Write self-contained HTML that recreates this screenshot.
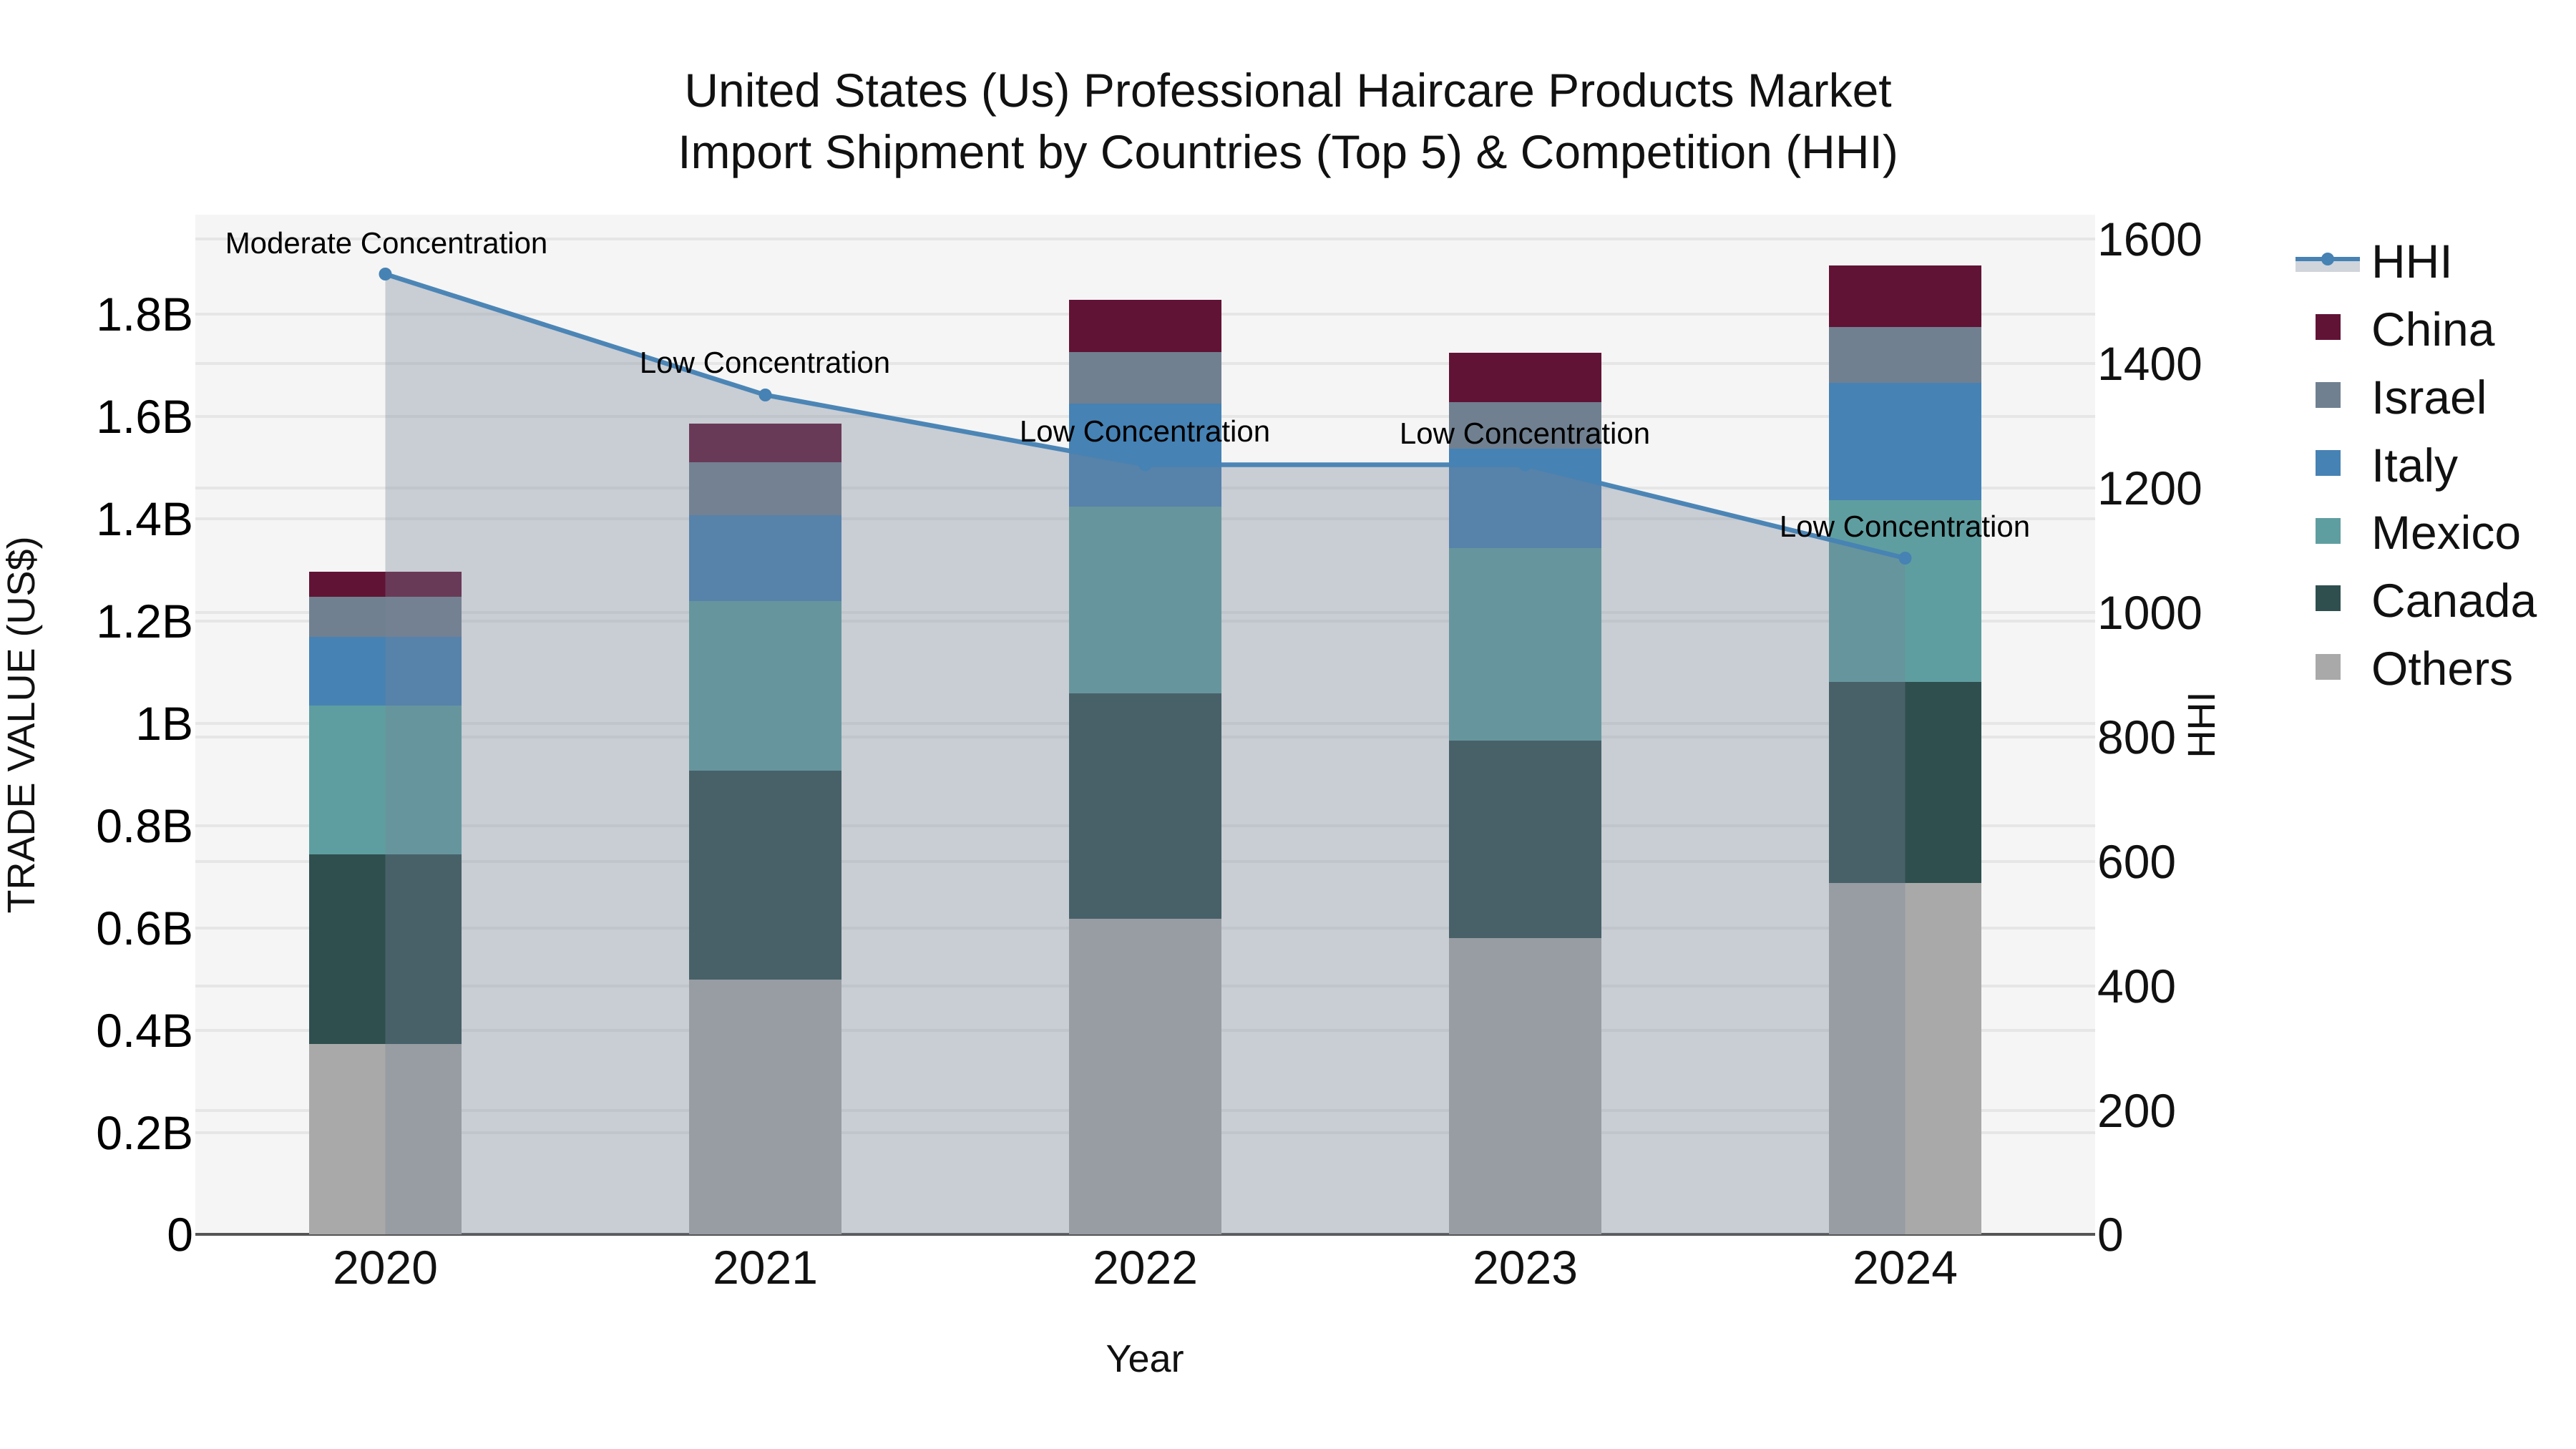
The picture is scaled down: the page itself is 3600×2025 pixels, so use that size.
<!DOCTYPE html>
<html>
<head>
<meta charset="utf-8">
<style>
html,body{margin:0;padding:0;background:#fff;width:3600px;height:2025px;overflow:hidden}
svg{display:block;position:absolute;left:0;top:0}
text{font-family:"Liberation Sans",sans-serif;text-rendering:geometricPrecision}
.t{font-size:66px;fill:#111;text-anchor:middle}
.l{font-size:66px;fill:#000;text-anchor:end}
.r{font-size:66px;fill:#111;text-anchor:start}
.x{font-size:66px;fill:#111;text-anchor:middle}
.a{font-size:42px;fill:#000;text-anchor:middle}
.g{font-size:66px;fill:#111;text-anchor:start}
.at{font-size:54px;fill:#111;text-anchor:middle}
</style>
</head>
<body>
<svg width="3600" height="2025" viewBox="0 0 3600 2025" xmlns="http://www.w3.org/2000/svg">
<rect x="0" y="0" width="3600" height="2025" fill="#fff"/>
<rect x="273" y="300" width="2655" height="1425" fill="#f5f5f5"/>

<!-- gridlines -->
<g stroke="#e6e6e6" stroke-width="4" fill="none">
<path d="M273 1583H2928M273 1440H2928M273 1297H2928M273 1154H2928M273 1011H2928M273 868H2928M273 725H2928M273 582H2928M273 439H2928"/>
<path d="M273 1552H2928M273 1378H2928M273 1204H2928M273 1030H2928M273 856H2928M273 682H2928M273 508H2928M273 334H2928"/>
</g>
<path d="M273 1725H2928" stroke="#555" stroke-width="4" fill="none"/>

<!-- bars -->
<g shape-rendering="crispEdges">
<g>
<rect x="432" y="1459" width="213" height="266" fill="#a9a9a9"/>
<rect x="432" y="1194" width="213" height="265" fill="#2f4f4f"/>
<rect x="432" y="986" width="213" height="208" fill="#5f9ea0"/>
<rect x="432" y="890" width="213" height="96" fill="#4682b4"/>
<rect x="432" y="834" width="213" height="56" fill="#708090"/>
<rect x="432" y="799" width="213" height="35" fill="#611335"/>
</g>
<g>
<rect x="963" y="1369" width="213" height="356" fill="#a9a9a9"/>
<rect x="963" y="1077" width="213" height="292" fill="#2f4f4f"/>
<rect x="963" y="840" width="213" height="237" fill="#5f9ea0"/>
<rect x="963" y="720" width="213" height="120" fill="#4682b4"/>
<rect x="963" y="646" width="213" height="74" fill="#708090"/>
<rect x="963" y="592" width="213" height="54" fill="#611335"/>
</g>
<g>
<rect x="1494" y="1284" width="213" height="441" fill="#a9a9a9"/>
<rect x="1494" y="969" width="213" height="315" fill="#2f4f4f"/>
<rect x="1494" y="708" width="213" height="261" fill="#5f9ea0"/>
<rect x="1494" y="564" width="213" height="144" fill="#4682b4"/>
<rect x="1494" y="492" width="213" height="72" fill="#708090"/>
<rect x="1494" y="419" width="213" height="73" fill="#611335"/>
</g>
<g>
<rect x="2025" y="1311" width="213" height="414" fill="#a9a9a9"/>
<rect x="2025" y="1035" width="213" height="276" fill="#2f4f4f"/>
<rect x="2025" y="766" width="213" height="269" fill="#5f9ea0"/>
<rect x="2025" y="627" width="213" height="139" fill="#4682b4"/>
<rect x="2025" y="562" width="213" height="65" fill="#708090"/>
<rect x="2025" y="493" width="213" height="69" fill="#611335"/>
</g>
<g>
<rect x="2556" y="1234" width="213" height="491" fill="#a9a9a9"/>
<rect x="2556" y="953" width="213" height="281" fill="#2f4f4f"/>
<rect x="2556" y="699" width="213" height="254" fill="#5f9ea0"/>
<rect x="2556" y="535" width="213" height="164" fill="#4682b4"/>
<rect x="2556" y="457" width="213" height="78" fill="#708090"/>
<rect x="2556" y="371" width="213" height="86" fill="#611335"/>
</g>
</g>

<!-- HHI area, line, markers -->
<path d="M538.5 383L1069.5 552L1600.5 649.5L2131.5 649.5L2662.5 780V1725H538.5Z" fill="rgb(120,133,152)" fill-opacity="0.35"/>
<path d="M538.5 383L1069.5 552L1600.5 649.5L2131.5 649.5L2662.5 780" fill="none" stroke="#4682b4" stroke-width="6.5" stroke-opacity="0.97"/>
<g fill="#4682b4">
<circle cx="538.5" cy="383" r="9"/>
<circle cx="1069.5" cy="552" r="9"/>
<circle cx="1600.5" cy="649.5" r="9"/>
<circle cx="2131.5" cy="649.5" r="9"/>
<circle cx="2662.5" cy="780" r="9"/>
</g>

<!-- annotations -->
<text class="a" x="540" y="354">Moderate Concentration</text>
<text class="a" x="1069" y="521">Low Concentration</text>
<text class="a" x="1600" y="617">Low Concentration</text>
<text class="a" x="2131" y="620">Low Concentration</text>
<text class="a" x="2662" y="750">Low Concentration</text>

<!-- title -->
<text class="t" x="1800" y="149">United States (Us) Professional Haircare Products Market</text>
<text class="t" x="1800" y="235">Import Shipment by Countries (Top 5) &amp; Competition (HHI)</text>

<!-- left ticks -->
<text class="l" x="270" y="462">1.8B</text>
<text class="l" x="270" y="605">1.6B</text>
<text class="l" x="270" y="748">1.4B</text>
<text class="l" x="270" y="891">1.2B</text>
<text class="l" x="270" y="1034">1B</text>
<text class="l" x="270" y="1177">0.8B</text>
<text class="l" x="270" y="1320">0.6B</text>
<text class="l" x="270" y="1463">0.4B</text>
<text class="l" x="270" y="1606">0.2B</text>
<text class="l" x="270" y="1748">0</text>

<!-- right ticks -->
<text class="r" x="2931" y="357">1600</text>
<text class="r" x="2931" y="531">1400</text>
<text class="r" x="2931" y="705">1200</text>
<text class="r" x="2931" y="879">1000</text>
<text class="r" x="2931" y="1053">800</text>
<text class="r" x="2931" y="1227">600</text>
<text class="r" x="2931" y="1401">400</text>
<text class="r" x="2931" y="1575">200</text>
<text class="r" x="2931" y="1748">0</text>

<!-- x ticks -->
<text class="x" x="538.5" y="1794">2020</text>
<text class="x" x="1069.5" y="1794">2021</text>
<text class="x" x="1600.5" y="1794">2022</text>
<text class="x" x="2131.5" y="1794">2023</text>
<text class="x" x="2662.5" y="1794">2024</text>

<!-- axis titles -->
<text class="at" x="1600" y="1917">Year</text>
<text class="at" transform="translate(48 1013) rotate(-90)">TRADE VALUE (US$)</text>
<text class="at" transform="translate(3095 1013) rotate(-90)">HHI</text>

<!-- legend -->
<rect x="3208" y="362" width="90" height="18" fill="rgb(120,133,152)" fill-opacity="0.35"/>
<path d="M3208 362H3298" stroke="#4682b4" stroke-width="6" fill="none"/>
<circle cx="3253" cy="362" r="9" fill="#4682b4"/>
<g shape-rendering="crispEdges">
<rect x="3236" y="439" width="35" height="36" fill="#611335"/>
<rect x="3236" y="534" width="35" height="36" fill="#708090"/>
<rect x="3236" y="629" width="35" height="36" fill="#4682b4"/>
<rect x="3236" y="724" width="35" height="36" fill="#5f9ea0"/>
<rect x="3236" y="818" width="35" height="36" fill="#2f4f4f"/>
<rect x="3236" y="914" width="35" height="36" fill="#a9a9a9"/>
</g>
<text class="g" x="3314" y="388">HHI</text>
<text class="g" x="3314" y="483">China</text>
<text class="g" x="3314" y="578">Israel</text>
<text class="g" x="3314" y="673">Italy</text>
<text class="g" x="3314" y="767">Mexico</text>
<text class="g" x="3314" y="862">Canada</text>
<text class="g" x="3314" y="957">Others</text>
</svg>
</body>
</html>
